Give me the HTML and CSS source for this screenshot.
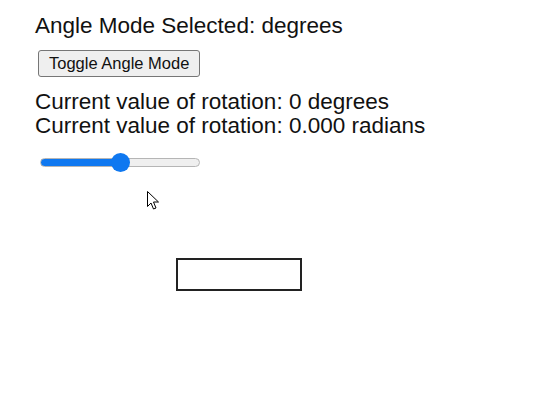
FILE: index.html
```html
<!DOCTYPE html>
<html>
<head>
<meta charset="utf-8">
<link rel="stylesheet" href="styles.css">
</head>
<body>
<main class="page">
  <p class="mode">Angle Mode Selected: degrees</p>
  <button class="toggle" type="button">Toggle Angle Mode</button>
  <div class="values">
    <p class="value">Current value of rotation: 0 degrees</p>
    <p class="value">Current value of rotation: 0.000 radians</p>
  </div>
  <input class="slider" type="range" min="0" max="100" value="50">
  <div class="canvas">
    <div class="box"></div>
  </div>
</main>
<svg class="cursor" width="13" height="20" viewBox="0 0 13 20">
  <path d="M0.5 0.5 L0.5 15.5 L4 12 L6.5 18 L9 17 L6.5 11 L11.5 11 Z" fill="#fff" stroke="#000" stroke-width="1" stroke-linejoin="miter"/>
</svg>
</body>
</html>
```

FILE: styles.css
```css
html, body {
  margin: 0;
  padding: 0;
  background: #ffffff;
}

body {
  font-family: "Liberation Sans", Arial, sans-serif;
  color: #111111;
  position: relative;
  width: 536px;
  height: 417px;
  overflow: hidden;
}

.page {
  padding: 14px 0 0 35px;
  display: flex;
  flex-direction: column;
  align-items: flex-start;
}

.mode {
  margin: 0;
  font-size: 22.5px;
  line-height: 24px;
}

.toggle {
  margin: 12px 0 0 3px;
  height: 27px;
  padding: 0 10px;
  font-family: "Liberation Sans", Arial, sans-serif;
  font-size: 16.5px;
  color: #111;
  background: #efefef;
  border: 1px solid #767676;
  border-radius: 3px;
}

.values {
  margin-top: 13px;
}

.value {
  margin: 0;
  font-size: 22.5px;
  line-height: 24px;
}

.slider {
  -webkit-appearance: none;
  appearance: none;
  margin: 15px 0 0 5px;
  width: 160px;
  height: 19px;
  background: transparent;
}

.slider::-webkit-slider-runnable-track {
  height: 9px;
  border-radius: 5px;
  box-sizing: border-box;
  border: 1px solid #b5b5b5;
  background: linear-gradient(to right, #0f78f0 0, #0f78f0 50%, #efefef 50%, #efefef 100%);
}

.slider::-webkit-slider-thumb {
  -webkit-appearance: none;
  appearance: none;
  width: 19px;
  height: 19px;
  margin-top: -6px;
  border-radius: 50%;
  background: #0f78f0;
  border: none;
}

.canvas {
  margin: 86px 0 0 141px;
}

.box {
  width: 122px;
  height: 29px;
  border: 2px solid #222222;
}

.cursor {
  position: absolute;
  left: 147px;
  top: 191px;
}
```
